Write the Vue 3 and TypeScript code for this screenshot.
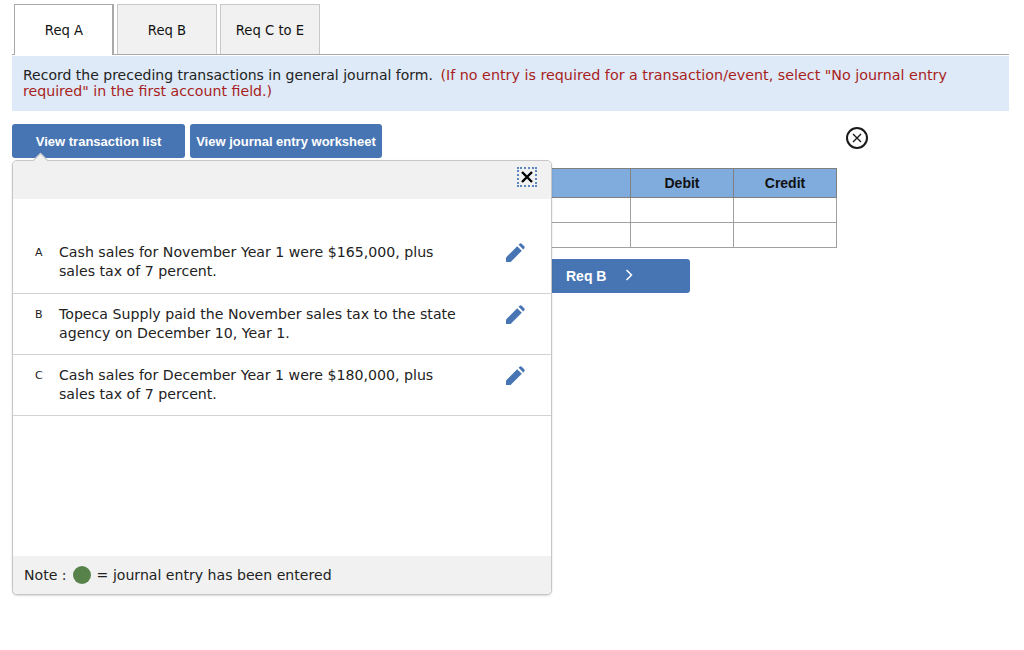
<script setup lang="ts">
interface Transaction {
  id: string
  lines: string[]
}

const tabs = ['Req A', 'Req B', 'Req C to E']

const transactions: Transaction[] = [
  { id: 'A', lines: ['Cash sales for November Year 1 were $165,000, plus', 'sales tax of 7 percent.'] },
  { id: 'B', lines: ['Topeca Supply paid the November sales tax to the state', 'agency on December 10, Year 1.'] },
  { id: 'C', lines: ['Cash sales for December Year 1 were $180,000, plus', 'sales tax of 7 percent.'] }
]
</script>

<template>
  <div class="page">
    <div class="tabs">
      <div v-for="(tab, index) in tabs" :key="tab" class="tab" :class="{ active: index === 0 }">{{ tab }}</div>
    </div>

    <div class="banner">
      <div>Record the preceding transactions in general journal form. <span class="red red-first">(If no entry is required for a transaction/event, select "No journal entry</span></div>
      <div class="red red-second">required" in the first account field.)</div>
    </div>

    <div class="toolbar">
      <button class="btn btn-list">View transaction list</button>
      <button class="btn btn-sheet">View journal entry worksheet</button>
      <svg class="close" width="24" height="24" viewBox="0 0 24 24">
        <circle cx="12" cy="12" r="10" fill="none" stroke="#1a1a1a" stroke-width="2" />
        <path d="M8 8l8 8M16 8l-8 8" stroke="#1a1a1a" stroke-width="1.4" />
      </svg>
    </div>

    <div class="work">
      <table class="grid">
        <thead>
          <tr><th></th><th>Debit</th><th>Credit</th></tr>
        </thead>
        <tbody>
          <tr><td></td><td></td><td></td></tr>
          <tr><td></td><td></td><td></td></tr>
        </tbody>
      </table>
      <div class="next">
        <button class="btn-next">Req B
          <svg width="9" height="12" viewBox="0 0 9 12"><path d="M1.5 1l5 5-5 5" fill="none" stroke="#fff" stroke-width="1.5" /></svg>
        </button>
      </div>

      <div class="popup">
        <span class="notch"></span>
        <div class="popup-head">
          <span class="popup-x">
            <svg width="14" height="14" viewBox="0 0 14 14"><path d="M2 2l10 10M12 2L2 12" stroke="#000" stroke-width="2.4" /></svg>
          </span>
        </div>
        <div class="list">
          <div v-for="t in transactions" :key="t.id" class="row">
            <span class="row-id">{{ t.id }}</span>
            <div class="row-text">
              <div v-for="line in t.lines" :key="line">{{ line }}</div>
            </div>
            <svg class="pencil" width="20" height="20" viewBox="0 0 20 20">
              <path d="M1 19v-4.6L12.2 3.2l4.6 4.6L5.6 19z" fill="#4775b3" />
              <path d="M13.6 1.8l1-1a1.5 1.5 0 0 1 2.1 0l2.5 2.5a1.5 1.5 0 0 1 0 2.1l-1 1z" fill="#4775b3" />
            </svg>
          </div>
        </div>
        <div class="popup-foot">
          Note :<span class="dot"></span>= journal entry has been entered
        </div>
      </div>
    </div>
  </div>
</template>

<style scoped>
.page {
  width: 1024px;
  height: 650px;
  overflow: hidden;
  background: #fff;
  font-family: "DejaVu Sans", sans-serif;
  font-size: 14px;
  color: #222;
}

.tabs {
  display: flex;
  gap: 3px;
  margin: 4px 15px 0 12px;
  padding-left: 2px;
  height: 51px;
  box-sizing: border-box;
  border-bottom: 1px solid #a9a9a9;
}

.tab {
  width: 100px;
  height: 50px;
  box-sizing: border-box;
  display: flex;
  align-items: center;
  justify-content: center;
  padding-top: 1px;
  background: #f1f1f1;
  border: 1px solid #c8c8c8;
  border-bottom: none;
  font-size: 13.2px;
  color: #111;
}

.tab.active {
  height: 51px;
  padding: 0 0 0 1px;
  background: #fff;
  border-color: #a9a9a9;
  border-right-width: 2px;
}

.banner {
  margin: 1px 15px 0 12px;
  box-sizing: border-box;
  height: 55px;
  padding: 11px 0 0 11px;
  background: #deeaf7;
  line-height: 16px;
  color: #222;
}

.red {
  color: #a81e1e;
}

.red-first {
  margin-left: 3px;
  font-size: 14.3px;
}

.red-second {
  font-size: 14.17px;
}

.toolbar {
  display: flex;
  align-items: flex-start;
  gap: 5px;
  margin: 13px 0 0 12px;
  height: 34px;
}

.btn {
  height: 34px;
  border: none;
  border-radius: 3px;
  background: #4775b3;
  color: #fff;
  font-family: "Liberation Sans", Arial, sans-serif;
  font-weight: 700;
  font-size: 13px;
  padding: 0;
}

.btn-list {
  width: 173px;
}

.btn-sheet {
  width: 192px;
}

.close {
  margin: 2px 0 0 458px;
}

.work {
  position: relative;
  margin: 10px 0 0 12px;
}

.grid {
  width: 825px;
  height: 79px;
  border-collapse: collapse;
  table-layout: fixed;
  border: 1px solid #8a8a8a;
}

.grid th {
  height: 28px;
  background: #7fabdd;
  border: 1px solid #808080;
  font-family: "Liberation Sans", Arial, sans-serif;
  font-size: 14px;
  font-weight: 700;
  color: #111;
  padding: 0;
}

.grid th:nth-child(2),
.grid th:nth-child(3) {
  width: 102px;
}

.grid td {
  height: 24px;
  border: 1px solid #a0a0a0;
  padding: 0;
}

.next {
  display: flex;
  margin-top: 11px;
}

.btn-next {
  width: 678px;
  height: 34px;
  border: none;
  border-radius: 3px;
  background: #4775b3;
  color: #fff;
  font-family: "Liberation Sans", Arial, sans-serif;
  font-weight: 700;
  font-size: 14px;
  text-align: left;
  padding: 0 0 0 554px;
}

.btn-next svg {
  margin-left: 15px;
}

.popup {
  position: absolute;
  left: 0;
  top: -8px;
  width: 540px;
  height: 435px;
  box-sizing: border-box;
  display: flex;
  flex-direction: column;
  background: #fff;
  border: 1px solid #c6c6c6;
  border-radius: 5px;
  box-shadow: 0 1px 2px rgba(0, 0, 0, 0.15);
}

.notch {
  position: absolute;
  left: 22px;
  top: -6px;
  width: 10px;
  height: 10px;
  background: #f1f1f1;
  border-left: 1px solid #c6c6c6;
  border-top: 1px solid #c6c6c6;
  transform: rotate(45deg);
}

.popup-head {
  height: 38px;
  flex: none;
  display: flex;
  justify-content: flex-end;
  background: #f1f1f1;
  border-radius: 5px 5px 0 0;
  padding: 6px 14px 0 0;
  box-sizing: border-box;
}

.popup-x {
  width: 20px;
  height: 20px;
  box-sizing: border-box;
  display: flex;
  align-items: center;
  justify-content: center;
  border: 2px dotted #5b86c0;
}

.list {
  flex: 1;
  padding-top: 33px;
}

.row {
  display: flex;
  align-items: flex-start;
  height: 61px;
  box-sizing: border-box;
  padding: 11px 0 0 22px;
  border-bottom: 1px solid #d3d3d3;
  font-size: 14.15px;
  line-height: 19px;
}

.row:first-child {
  height: 62px;
}

.row-id {
  width: 24px;
  font-size: 11px;
}

.row-text {
  flex: 1;
}

.pencil {
  margin: 0 26px 0 0;
}

.popup-foot {
  height: 38px;
  flex: none;
  display: flex;
  align-items: center;
  box-sizing: border-box;
  padding-left: 11px;
  background: #f1f1f1;
  border-radius: 0 0 5px 5px;
  font-size: 14.1px;
}

.dot {
  width: 18px;
  height: 18px;
  margin: 0 6px 0 6px;
  border-radius: 50%;
  background: #57834b;
}
</style>
